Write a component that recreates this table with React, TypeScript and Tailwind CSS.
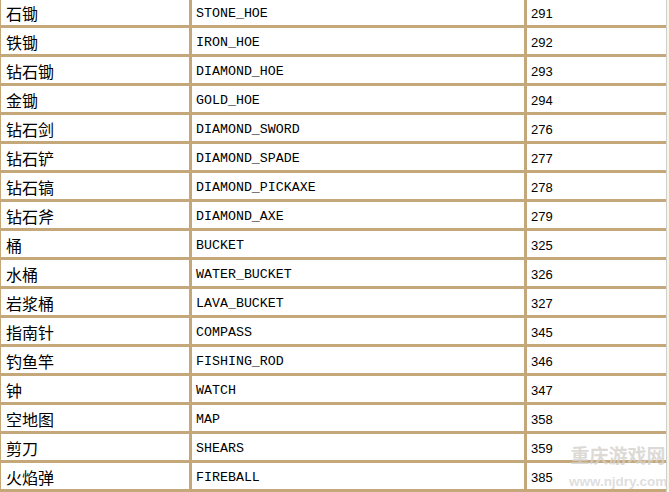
const rows = [
  { name: "石锄", id: "STONE_HOE", num: 291 },
  { name: "铁锄", id: "IRON_HOE", num: 292 },
  { name: "钻石锄", id: "DIAMOND_HOE", num: 293 },
  { name: "金锄", id: "GOLD_HOE", num: 294 },
  { name: "钻石剑", id: "DIAMOND_SWORD", num: 276 },
  { name: "钻石铲", id: "DIAMOND_SPADE", num: 277 },
  { name: "钻石镐", id: "DIAMOND_PICKAXE", num: 278 },
  { name: "钻石斧", id: "DIAMOND_AXE", num: 279 },
  { name: "桶", id: "BUCKET", num: 325 },
  { name: "水桶", id: "WATER_BUCKET", num: 326 },
  { name: "岩浆桶", id: "LAVA_BUCKET", num: 327 },
  { name: "指南针", id: "COMPASS", num: 345 },
  { name: "钓鱼竿", id: "FISHING_ROD", num: 346 },
  { name: "钟", id: "WATCH", num: 347 },
  { name: "空地图", id: "MAP", num: 358 },
  { name: "剪刀", id: "SHEARS", num: 359 },
  { name: "火焰弹", id: "FIREBALL", num: 385 },
];

export default function App() {
  return (
    <div className="relative w-[669px] h-[492px] overflow-hidden bg-[#fbf4de]">
      {/* item table */}
      <div className="w-[667px] border-r border-[#cfcfcf]">
        <div className="-mt-px flex flex-col gap-[3px] bg-[#c4a87a] pl-px pb-[3px]">
          {rows.map((r) => (
            <div key={r.id} className="grid grid-cols-[188px_332px_139px] gap-[3px] h-[26px]">
              <div className="flex items-center bg-white pl-[5px] pt-[2px] text-[16px] text-black font-['Noto_Sans_CJK_SC',sans-serif]">
                {r.name}
              </div>
              <div className="flex items-center bg-white pl-[4px] pt-[3px] text-[13.3px] text-black font-['Liberation_Mono',monospace]">
                {r.id}
              </div>
              <div className="flex items-center bg-white pl-[4px] pt-[3px] text-[13px] text-black font-['Liberation_Sans',sans-serif]">
                {r.num}
              </div>
            </div>
          ))}
        </div>
      </div>

      {/* watermark */}
      <div className="absolute left-[569px] bottom-[3px] w-[98px] flex flex-col items-center whitespace-nowrap pointer-events-none select-none">
        <div className="text-[19px] leading-[20px] font-bold text-[#d4d0ca]/80 font-['Noto_Sans_CJK_SC',sans-serif]">
          重庆游戏网
        </div>
        <div className="mt-[9px] text-[13.5px] leading-[15px] font-bold text-[#d6d6d6]/80 font-['Liberation_Sans',sans-serif]">
          www.njdry.com
        </div>
      </div>
    </div>
  );
}
